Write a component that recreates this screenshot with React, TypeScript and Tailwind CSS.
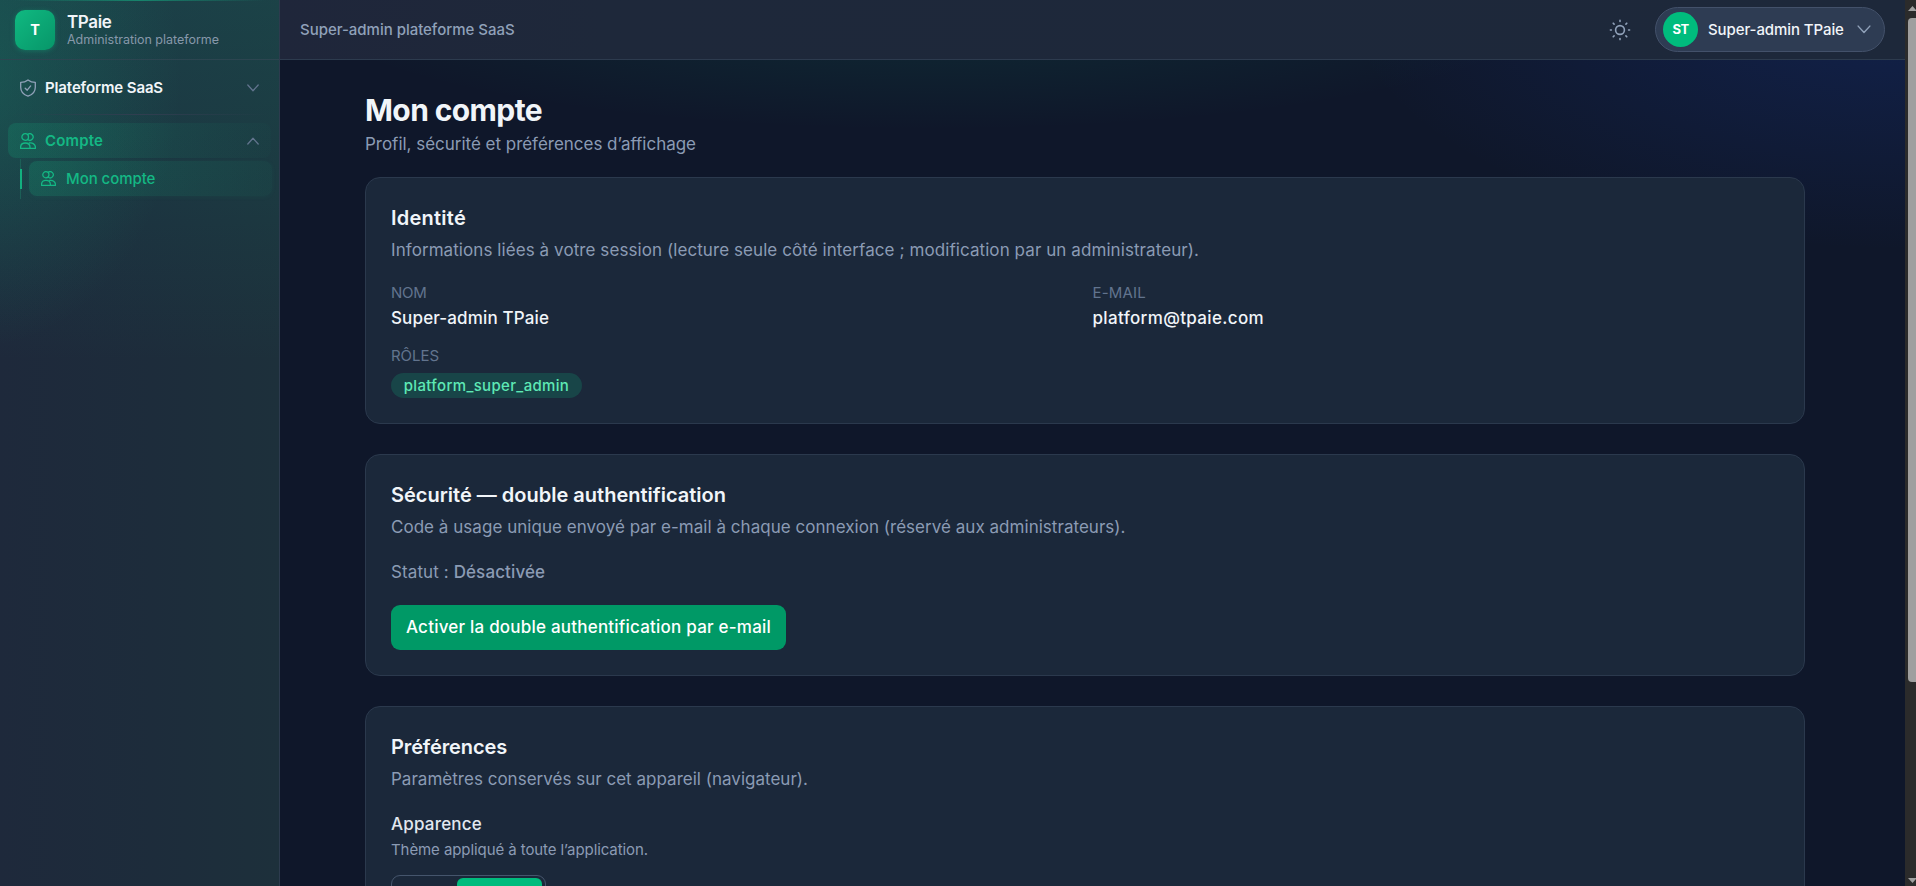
import type { ReactNode } from 'react';

function UsersIcon({ className }: { className: string }) {
  return (
    <svg viewBox="0 0 16 16" fill="none" stroke="currentColor" strokeWidth="1.3" strokeLinejoin="round" strokeLinecap="round" className={className}>
      <circle cx="5.2" cy="4" r="3.3" />
      <path d="M7.6 1.5a3.3 3.3 0 1 1 0 5" />
      <path d="M.6 15.4v-1.1c0-2.7 2.1-4.3 4.700-4.300s4.700 1.600 4.700 4.300v1.100Z" />
      <path d="M9.2 10c3.400-.5 6.200 1.300 6.200 4.300v1.100H10" />
    </svg>
  );
}

function ShieldIcon() {
  return (
    <svg viewBox="0 0 16 18" fill="none" stroke="currentColor" strokeWidth="1.3" strokeLinejoin="round" strokeLinecap="round" className="h-[18px] w-4 shrink-0 text-slate-400">
      <path d="M8 .9C6 2.500 3.500 3.300.7 3.300v5c0 4.500 2.900 7.500 7.300 8.900 4.400-1.400 7.300-4.400 7.300-8.900v-5C12.500 3.300 10 2.500 8 .9Z" />
      <path d="m5.200 9.200 2 2 3.500-4.300" />
    </svg>
  );
}

function SunIcon() {
  return (
    <svg viewBox="0 0 22 22" fill="none" stroke="currentColor" strokeWidth="1.6" strokeLinecap="round" className="h-[22px] w-[22px] text-slate-400">
      <circle cx="11" cy="11" r="4.400" />
      <path d="M11 1.400v1M11 19.600v1M1.400 11h1M19.600 11h1M4.200 4.200l.9.9M16.900 16.900l.9.9M4.200 17.800l.9-.9M16.900 5.100l.9-.9" />
    </svg>
  );
}

function Chevron({ up, className }: { up?: boolean; className: string }) {
  return (
    <svg viewBox="0 0 12 8" fill="none" stroke="currentColor" strokeWidth="1.300" strokeLinecap="round" strokeLinejoin="round" className={className}>
      <path d={up ? 'M.8 7 6 1.300 11.200 7' : 'M.8 1 6 6.700 11.200 1'} />
    </svg>
  );
}

function Card({ title, description, children }: { title: ReactNode; description: ReactNode; children: ReactNode }) {
  return (
    <section className="mb-[30px] rounded-[15px] border border-[#2b394d] bg-[#1b283a] px-[25px] pt-[26px] pb-[25px]">
      {title}
      <div className="mt-1.5 h-6 text-[17px] leading-6 whitespace-nowrap text-[#8b9bb4]">{description}</div>
      {children}
    </section>
  );
}

function Sidebar() {
  return (
    <aside className="relative flex w-[280px] shrink-0 flex-col border-r border-[#2d3b4e] bg-[linear-gradient(90deg,#1e293b_0%,#1d2c3b_55%,#1d303b_100%)]">
      <div className="pointer-events-none absolute inset-x-0 top-0 h-[360px] bg-[radial-gradient(ellipse_75%_75%_at_-10%_22%,rgba(16,185,129,0.22),transparent_100%),linear-gradient(180deg,rgba(22,125,110,0.24)_0%,rgba(20,120,105,0.14)_50%,transparent_100%)]" />
      <div className="pointer-events-none absolute inset-x-0 top-0 h-px bg-[linear-gradient(90deg,transparent_5%,#17846c_50%,transparent_95%)]" />
      <div className="relative flex h-[60px] shrink-0 items-center border-b border-[#2c4550] pl-[15px]">
        <div className="flex h-10 w-10 items-center justify-center rounded-[10px] bg-linear-to-br from-[#10b981] to-[#079669] text-[14.5px] font-bold text-white shadow-[0_1px_5px_rgba(16,185,129,0.35)]">T</div>
        <div className="ml-[12px] whitespace-nowrap">
          <div className="text-[17px] leading-[20px] font-semibold tracking-[-0.36px] text-slate-100">TPaie</div>
          <div className="text-[12.5px] leading-[16px] tracking-[-0.018px] text-[#8798aa]">Administration plateforme</div>
        </div>
      </div>
      <nav className="relative whitespace-nowrap">
        <div className="mx-2 mt-[10px] flex h-[35px] items-center gap-[9px] pr-[12px] pl-3">
          <ShieldIcon />
          <span className="flex-1 pt-[2px] text-[15px] font-semibold tracking-[-0.122px] text-slate-100">Plateforme SaaS</span>
          <Chevron className="h-2 w-3 text-slate-500" />
        </div>
        <div className="mt-[9px] h-px bg-[linear-gradient(90deg,transparent_4%,#303e50_50%,transparent_96%)]" />
        <div className="mx-2 mt-2 flex h-[35px] items-center gap-[9px] rounded-lg bg-[linear-gradient(90deg,rgba(16,185,129,0.18),rgba(16,185,129,0.02))] pr-[12px] pl-3 text-[#14b884]">
          <UsersIcon className="h-4 w-4 shrink-0" />
          <span className="flex-1 pt-px text-[15px] font-semibold tracking-[0.155px]">Compte</span>
          <Chevron up className="h-2 w-3 text-slate-500" />
        </div>
        <div className="mt-px mr-[7px] ml-5 flex">
          <div className="flex h-10 w-0.5 flex-col bg-[linear-gradient(90deg,#1c5f57_50%,transparent_50%)] pt-[10px]">
            <div className="h-5 bg-[#12b07f]" />
          </div>
          <div className="mt-[2px] ml-[7px] flex h-[35px] flex-1 items-center gap-[10px] rounded-lg bg-[linear-gradient(90deg,rgba(16,185,129,0.2),rgba(16,185,129,0.05))] pl-[12px] text-[#14b884] shadow-[0_1px_5px_rgba(16,185,129,0.06)]">
            <UsersIcon className="h-[15px] w-[15px] shrink-0" />
            <span className="pt-[2px] text-[15px] font-medium tracking-[-0.05px]">Mon compte</span>
          </div>
        </div>
      </nav>
    </aside>
  );
}

function Header() {
  return (
    <header className="relative flex h-[60px] shrink-0 items-center border-b border-[#2d3b4e] bg-[linear-gradient(90deg,#1f263a_0%,#1e283a_20%,#1d283a_100%)] pr-5 pl-5 whitespace-nowrap">
      <span className="flex-1 pt-[2px] text-[15px] font-medium tracking-[-0.02px] text-slate-400">Super-admin plateforme SaaS</span>
      <SunIcon />
      <div className="ml-[24px] flex h-[45px] w-[230px] items-center rounded-full border border-[#43516a] bg-[#2e3c53] pl-[7px]">
        <div className="flex h-[35px] w-[35px] items-center justify-center rounded-full bg-[#00bc7d] text-[13px] font-bold tracking-[-0.5px] text-white">ST</div>
        <span className="ml-[10px] w-[136px] pt-[2px] text-[15px] font-medium tracking-[-0.09px] text-slate-100">Super-admin TPaie</span>
        <Chevron className="ml-[13px] h-[9px] w-[14px] text-slate-400" />
      </div>
    </header>
  );
}

function Scrollbar() {
  return (
    <div className="flex w-[11px] shrink-0 flex-col items-end overflow-hidden bg-[#2b2b2b]">
      <svg viewBox="0 0 8 18" className="h-[18px] w-2 shrink-0" fill="#a0a0a0">
        <path d="M0 11 4.500 6 9 11Z" />
      </svg>
      <div className="h-[664px] w-2 shrink-0 rounded-l-[4px] bg-[#9f9f9f]" />
      <div className="flex-1" />
      <svg viewBox="0 0 8 10" className="h-[10px] w-2 shrink-0" fill="#a0a0a0">
        <path d="M0 2 4.500 7 9 2Z" />
      </svg>
    </div>
  );
}

export default function App() {
  return (
    <div className="flex h-[886px] w-full overflow-hidden bg-[#0f172a] font-['Inter',sans-serif] antialiased">
      <Sidebar />
      <div className="flex min-w-0 flex-1 flex-col bg-[radial-gradient(ellipse_640px_130px_at_40%_0%,rgba(16,185,129,0.13),transparent),radial-gradient(ellipse_560px_250px_at_100%_0%,rgba(29,78,216,0.2),transparent)]">
        <Header />
        <main className="mt-[32px] ml-[85px] h-[794px] w-[1440px] overflow-hidden whitespace-nowrap">
          <h1 className="text-[30px] leading-9 font-bold tracking-[-0.603px] text-slate-100">Mon compte</h1>
          <p className="mt-[4px] mb-[21px] text-[17px] leading-6 tracking-[-0.02px] text-[#8b9bb4]">Profil, sécurité et préférences d’affichage</p>

          <Card
            title={<h2 className="text-xl leading-7 font-semibold tracking-[0.242px] text-slate-100">Identité</h2>}
            description={<span className="tracking-[0.076px]">Informations liées à votre session (lecture seule côté interface ; modification par un administrateur).</span>}
          >
            <dl className="mt-[21px] grid grid-cols-2 gap-x-[15px] gap-y-[15px]">
              <div>
                <dt className="text-[15px] leading-5 tracking-[-0.2px] text-[#62748e]">NOM</dt>
                <dd className="mt-[3px] text-[17px] leading-6 font-medium tracking-[0.139px] text-slate-100">Super-admin TPaie</dd>
              </div>
              <div>
                <dt className="text-[15px] leading-5 tracking-[0.196px] text-[#62748e]">E-MAIL</dt>
                <dd className="mt-[3px] text-[17px] leading-6 font-medium tracking-[0.342px] text-slate-100">platform@tpaie.com</dd>
              </div>
              <div>
                <dt className="mt-px text-[15px] leading-5 tracking-[-0.049px] text-[#62748e]">RÔLES</dt>
                <dd className="mt-[7px] flex h-[25px] w-[191px] items-center justify-center rounded-full bg-[#184548] text-[15px] leading-5 font-medium tracking-[0.339px] text-[#5ee9b5]">platform_super_admin</dd>
              </div>
            </dl>
          </Card>

          <Card
            title={<h2 className="text-xl leading-7 font-semibold text-slate-100">Sécurité — double authentification</h2>}
            description={<span className="tracking-[0.031px]">Code à usage unique envoyé par e-mail à chaque connexion (réservé aux administrateurs).</span>}
          >
            <p className="mt-[21px] text-[17px] leading-6 text-[#8b9bb4]">
              <span className="tracking-[0.1px]">Statut : </span>
              <span className="font-medium tracking-[0.114px]">Désactivée</span>
            </p>
            <button className="mt-[21px] flex h-[45px] w-[395px] items-center justify-center rounded-[9px] bg-[#009966] pb-px text-[17px] leading-6 font-medium tracking-[0.213px] text-white">
              Activer la double authentification par e-mail
            </button>
          </Card>

          <Card
            title={<h2 className="text-xl leading-7 font-semibold tracking-[-0.125px] text-slate-100">Préférences</h2>}
            description={<span className="tracking-[0.015px]">Paramètres conservés sur cet appareil (navigateur).</span>}
          >
            <h3 className="mt-[21px] text-[17px] leading-6 font-medium tracking-[0.206px] text-slate-200">Apparence</h3>
            <p className="mt-1 text-[15px] leading-5 tracking-[-0.083px] text-[#8b9bb4]">Thème appliqué à toute l’application.</p>
            <div className="mt-[15px] flex h-[42px] w-[155px] justify-end rounded-[9px] border border-[#45556c] py-[2px] pr-[3px]">
              <div className="w-[85px] rounded-[6px] bg-[#00bc7d]" />
            </div>
          </Card>
        </main>
      </div>
      <Scrollbar />
    </div>
  );
}
